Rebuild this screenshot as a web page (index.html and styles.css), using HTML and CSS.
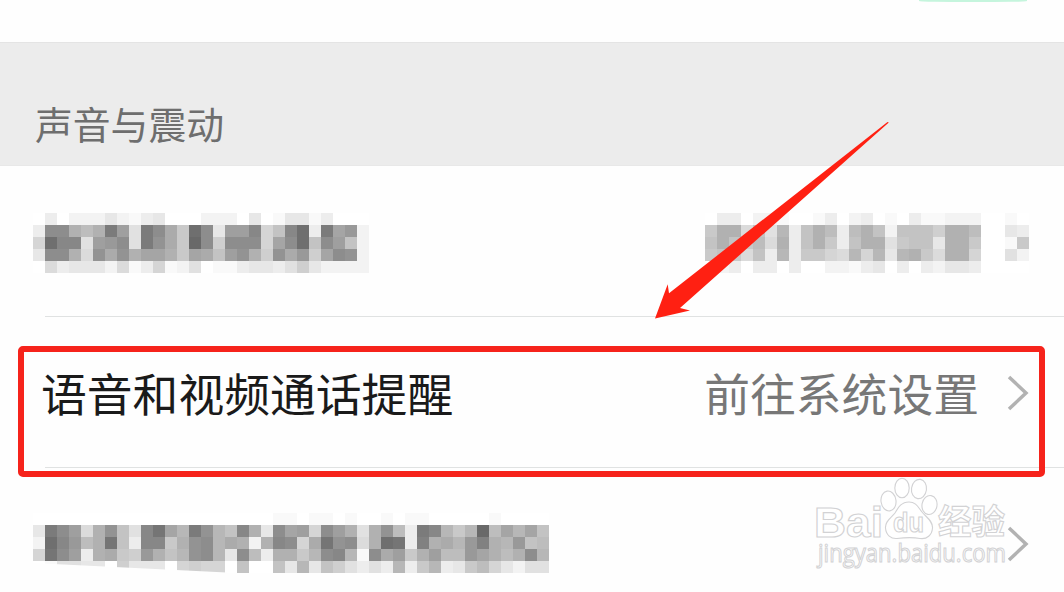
FILE: index.html
```html
<!DOCTYPE html>
<html lang="zh-CN">

<head>
  <meta charset="UTF-8">
  <meta name="viewport" content="width=device-width, initial-scale=1.0">
  <title>声音与震动</title>
  <link rel="stylesheet" href="styles.css">
</head>

<body>
  <div class="page">
    <div class="top-bar">
      <div class="switch-edge"></div>
    </div>

    <h2 class="section-title">声音与震动</h2>

    <div class="list">
      <div class="row">
        <div class="mosaic" id="mosaic-label"></div>
        <div class="mosaic" id="mosaic-value"></div>
      </div>

      <div class="row">
        <span class="label">语音和视频通话提醒</span>
        <span class="value">前往系统设置</span>
        <svg class="chevron" width="24" height="36" viewBox="0 0 24 36">
          <path d="M3 2 L20 18 L3 34" />
        </svg>
      </div>

      <div class="row last">
        <div class="mosaic cut" id="mosaic-last"></div>
        <svg class="chevron" width="24" height="36" viewBox="0 0 24 36">
          <path d="M3 2 L20 18 L3 34" />
        </svg>
      </div>
    </div>

    <div class="highlight"></div>

    <svg class="arrow" width="240" height="202" viewBox="652 120 240 202">
      <path d="M655 318.5 L667.7 284.3 L669 293.3 L887.5 122 L888.8 122.5 L680 308 L690 310.5 Z" />
    </svg>

    <svg class="watermark" width="204" height="110" viewBox="810 474 204 110">
      <text class="logo" x="814" y="537" font-size="42" textLength="69" lengthAdjust="spacingAndGlyphs">Bai</text>
      <ellipse cx="888.5" cy="501" rx="7.5" ry="10" transform="rotate(-8 888.5 501)" />
      <ellipse cx="902" cy="488" rx="7.2" ry="9.7" />
      <ellipse cx="919" cy="489" rx="7.5" ry="9.7" transform="rotate(8 919 489)" />
      <ellipse cx="929.5" cy="505" rx="7.5" ry="9.5" transform="rotate(10 929.5 505)" />
      <path d="M909 502 C901 502 898 508 895 513 C891 518 885 521 885.500 528 C886 535 891 539 897 538.500 C905 537.500 912 537 920 538.500 C927 539.500 932 535 932.500 528 C933 521 926 517 922 512 C918 507 916 502 909 502 Z" />
      <text class="du" x="893" y="532" font-size="27" textLength="31" lengthAdjust="spacingAndGlyphs">du</text>
      <text class="cjk" x="938" y="534" font-size="34" textLength="67" lengthAdjust="spacingAndGlyphs">经验</text>
      <text class="url" x="818" y="562" font-size="25" textLength="188" lengthAdjust="spacingAndGlyphs">jingyan.baidu.com</text>
    </svg>
  </div>

  <script src="script.js"></script>
</body>

</html>
```
FILE: styles.css
```css
body {
  margin: 0;
  background-color: #fefefe;
  font-family: "Noto Sans CJK SC", "Noto Sans", sans-serif;
}

.page {
  position: relative;
  width: 1064px;
  height: 592px;
  overflow: hidden;
}

.top-bar {
  display: flex;
  justify-content: flex-end;
  height: 42px;
  padding-right: 37px;
}

.switch-edge {
  width: 108px;
  height: 2px;
  background-color: #c5f5dd;
  border-radius: 0 0 50% 50%;
  filter: blur(0.7px);
}

.section-title {
  box-sizing: border-box;
  height: 124px;
  margin: 0;
  padding: 53px 0 0 35px;
  background-color: #ececec;
  border-top: 1px solid #e4e4e4;
  border-bottom: 1px solid #e8e8e8;
  color: #6e6e6e;
  font-size: 37.8px;
  font-weight: 400;
  line-height: 54px;
}

.row {
  display: flex;
  align-items: flex-start;
  box-sizing: border-box;
  height: 151px;
  margin-left: 45px;
  padding-top: 47px;
  border-bottom: 1px solid #e0e2e2;
}

.row.last {
  padding-top: 45px;
  border-bottom: none;
}

.row .label,
.row .value {
  font-size: 45.8px;
  line-height: 60px;
  white-space: nowrap;
}

.label {
  margin-left: -4px;
  color: #1a1a1a;
}

.value {
  margin-left: auto;
  color: #777;
}

.chevron {
  flex: none;
  margin: 13px 34px 0 27px;
  fill: none;
  stroke: #b2b2b2;
  stroke-width: 3.5;
}

.last .chevron {
  margin-left: auto;
}

.row:nth-child(2) {
  padding-top: 45px;
}

.mosaic {
  display: grid;
  grid-auto-rows: 12px;
  margin-left: -12px;
}

.mosaic + .mosaic {
  margin-left: 336px;
}

.mosaic.cut {
  clip-path: polygon(0 0, 100% 0, 100% 100%, 204px 100%, 204px 60px, 0 50px);
}

.highlight {
  position: absolute;
  left: 18px;
  top: 346px;
  width: 1015px;
  height: 119px;
  border: 6px solid #f6231b;
  border-radius: 5px;
}

.arrow {
  position: absolute;
  left: 652px;
  top: 120px;
  fill: #ff2012;
}

.watermark {
  position: absolute;
  left: 810px;
  top: 474px;
  fill: #fff;
  stroke: #d2d2d4;
  stroke-width: 1.1;
}

.watermark text {
  font-family: "Open Sans", "Noto Sans CJK SC", sans-serif;
}

.watermark .logo,
.watermark .du {
  font-family: "Liberation Sans", Arial, sans-serif;
  font-weight: 700;
}

.watermark .cjk {
  font-family: "Noto Sans CJK SC", sans-serif;
  font-weight: 700;
}
```
FILE: script.js
```js
// One letter per tile, a = dark grey, z = white
const mosaics = {
  'mosaic-label': [
    'zwzxxxvxywvzzzxxxzvzyvvywzzz',
    'wggmomdjudglqbgvjjfspfbwdkix',
    'sbffujigudhlqagrgggskgbpgjpx',
    'vggmthlhmkkmqklpjhmrhlirkghx',
    'ztwvvvxtywsyxuzyywvvwurvxxxx',
  ],
  'mosaic-value': [
    'zwwzxxyzzywzxwzyzwyyxxxzzyz',
    'qmmtpunwpmowompxppprmmozzvw',
    'pmpqotmwpmqwpmmuqppvmmqzzyq',
    'qpqtpwnwqqstnsnvnmqtmmszzux',
    'zxwzwwzwzzxxywvzwzwxvvwzzzz',
  ],
  'mosaic-last': [
    'zzzzzzzzzzzzzzzzzzzzyyzyyzyzzyzyyzzzzzyzzzz',
    'vdgjtmhpufckndhnpfmvgkjsgjmumhowdfnqnaoknkp',
    'xbfiomcpwffqmhgnlmxmfgslchgtmbcwemlniemnipo',
    'scgjwmlqrimpnhgnvgowmmqngfnygljqmjooikmomgn',
    'zyuuvvzrvvvzsrsszpzzpvnvpruwuwnwqnwvqosvxuu',
  ],
};

for (const id in mosaics) {
  const box = document.getElementById(id);
  const rows = mosaics[id];
  box.style.gridTemplateColumns = `repeat(${rows[0].length}, 12px)`;

  for (const ch of rows.join('')) {
    const grey = 105 + (ch.charCodeAt(0) - 97) * 6;
    const tile = document.createElement('i');
    tile.style.backgroundColor = `rgb(${grey}, ${grey}, ${grey})`;
    box.appendChild(tile);
  }
}
```
